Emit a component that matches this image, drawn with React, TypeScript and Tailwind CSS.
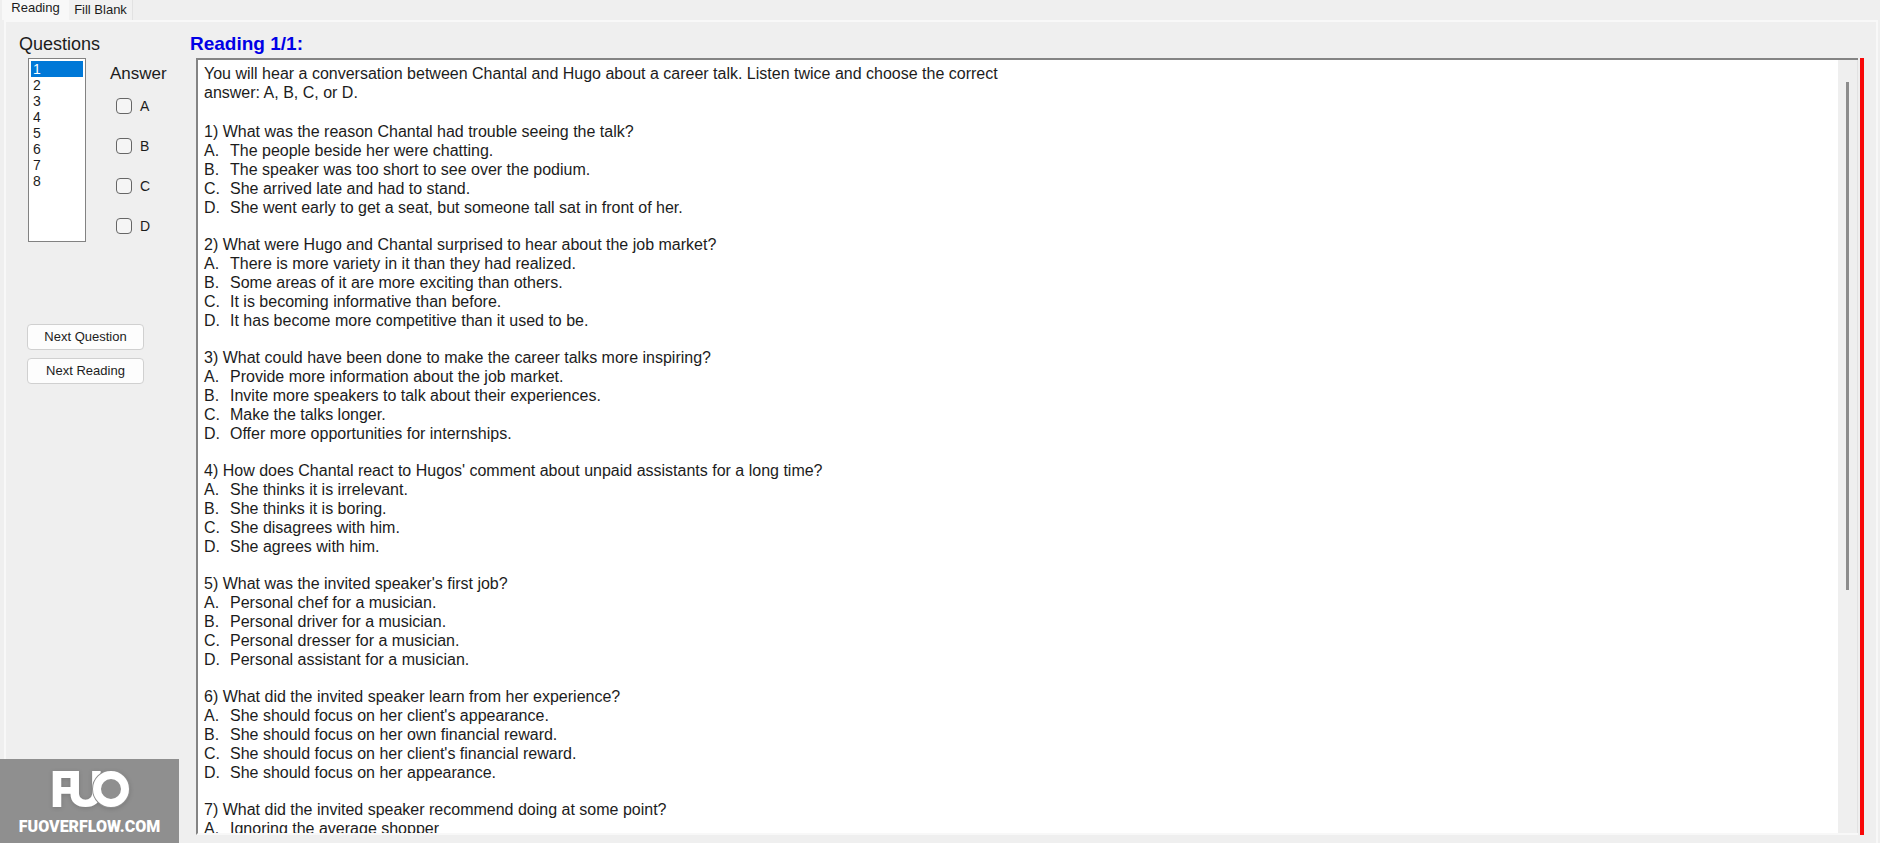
import { useState } from 'react'

const tabs = ['Reading', 'Fill Blank']
const choices = ['A', 'B', 'C', 'D']
const questionNumbers = ['1', '2', '3', '4', '5', '6', '7', '8']

const intro = [
  'You will hear a conversation between Chantal and Hugo about a career talk. Listen twice and choose the correct',
  'answer: A, B, C, or D.',
]

const questions = [
  {
    title: 'What was the reason Chantal had trouble seeing the talk?',
    options: [
      'The people beside her were chatting.',
      'The speaker was too short to see over the podium.',
      'She arrived late and had to stand.',
      'She went early to get a seat, but someone tall sat in front of her.',
    ],
  },
  {
    title: 'What were Hugo and Chantal surprised to hear about the job market?',
    options: [
      'There is more variety in it than they had realized.',
      'Some areas of it are more exciting than others.',
      'It is becoming informative than before.',
      'It has become more competitive than it used to be.',
    ],
  },
  {
    title: 'What could have been done to make the career talks more inspiring?',
    options: [
      'Provide more information about the job market.',
      'Invite more speakers to talk about their experiences.',
      'Make the talks longer.',
      'Offer more opportunities for internships.',
    ],
  },
  {
    title: "How does Chantal react to Hugos' comment about unpaid assistants for a long time?",
    options: [
      'She thinks it is irrelevant.',
      'She thinks it is boring.',
      'She disagrees with him.',
      'She agrees with him.',
    ],
  },
  {
    title: "What was the invited speaker's first job?",
    options: [
      'Personal chef for a musician.',
      'Personal driver for a musician.',
      'Personal dresser for a musician.',
      'Personal assistant for a musician.',
    ],
  },
  {
    title: 'What did the invited speaker learn from her experience?',
    options: [
      "She should focus on her client's appearance.",
      'She should focus on her own financial reward.',
      "She should focus on her client's financial reward.",
      'She should focus on her appearance.',
    ],
  },
  {
    title: 'What did the invited speaker recommend doing at some point?',
    options: ['Ignoring the average shopper'],
  },
]

function Tabs() {
  return (
    <div role="tablist" className="flex h-5 pl-0.5 text-[13px] leading-4">
      <button role="tab" aria-selected="true" className="w-[67px] bg-[#f8f8f8] pb-1">
        {tabs[0]}
      </button>
      <button
        role="tab"
        aria-selected="false"
        className="w-16 border-r border-[#e2e2e2] bg-[#f1f1f1]"
      >
        {tabs[1]}
      </button>
    </div>
  )
}

function QuestionList() {
  const [current, setCurrent] = useState('1')
  return (
    <select
      size={8}
      aria-labelledby="questions-label"
      value={current}
      onChange={(e) => setCurrent(e.target.value)}
      className="h-[184px] w-[58px] appearance-none overflow-hidden border border-[#828282] bg-white p-0.5 text-sm leading-4 outline-none"
    >
      {questionNumbers.map((n) => (
        <option
          key={n}
          value={n}
          className="h-4 min-h-0 px-0.5 py-0 leading-4 checked:bg-[linear-gradient(#0078d7,#0078d7)] checked:[-webkit-text-fill-color:white]"
        >
          {n}
        </option>
      ))}
    </select>
  )
}

function Answers() {
  return (
    <fieldset className="pt-1.5">
      <legend className="float-left pb-3.5 text-[17px] leading-5">Answer</legend>
      <div className="clear-both flex flex-col gap-6 pl-1.5">
        {choices.map((c) => (
          <label key={c} className="flex h-4 items-center gap-2 text-sm">
            <input
              type="checkbox"
              className="size-4 appearance-none rounded-sm border border-[#666] bg-[#f5f5f5] checked:bg-[#0078d7]"
            />
            {c}
          </label>
        ))}
      </div>
    </fieldset>
  )
}

function Logo() {
  return (
    <a
      href="#home"
      aria-label="FUOVERFLOW.COM"
      className="absolute bottom-0 left-0 flex h-[84px] w-[179px] flex-col items-center bg-[#8f8f8f] pt-3 text-white"
    >
      <svg viewBox="0 0 80 38" className="h-[38px] w-20 drop-shadow-sm" fill="none">
        <text x="0" y="36" fill="white" className="font-['Inter',sans-serif] text-[49px] font-extrabold">
          F<tspan dx="-11">U</tspan>
        </text>
        <circle cx="61" cy="18" r="18" stroke="#8f8f8f" strokeWidth="2" />
        <circle cx="61" cy="18" r="14" fill="#8f8f8f" stroke="white" strokeWidth="8" />
      </svg>
      <span className="mt-2 font-['Impact','Roboto',sans-serif] text-base leading-5 font-black">
        FUOVERFLOW.COM
      </span>
    </a>
  )
}

function ReadingText() {
  return (
    <article
      aria-label="Reading text"
      className="min-w-0 flex-1 overflow-hidden bg-white pt-1 pl-1.5 text-base leading-[19px] text-[#1c1c1c]"
    >
      <p className="mb-5">
        {intro.map((line) => (
          <span key={line} className="block">{line}</span>
        ))}
      </p>
      {questions.map((q, i) => (
        <section key={q.title} className="mb-[18px]">
          <h2>{i + 1}) {q.title}</h2>
          <ul>
            {q.options.map((option, n) => (
              <li key={option} className="flex">
                <span className="w-[26px]">{choices[n]}.</span>
                {option}
              </li>
            ))}
          </ul>
        </section>
      ))}
    </article>
  )
}

export default function App() {
  return (
    <div className="relative flex h-screen flex-col overflow-hidden bg-[#efefef] font-['Liberation_Sans',Arial,sans-serif] text-[#1c1c1c]">
      <Tabs />
      <main className="mr-0.5 ml-1 flex min-h-0 flex-1 border-t-2 border-r-2 border-l-2 border-[#f8f8f8]">
        <aside className="w-[184px] shrink-0 pt-2.5 pl-[13px]">
          <h1 id="questions-label" className="mb-0.5 text-lg leading-6">Questions</h1>
          <div className="flex gap-6 pl-[9px]">
            <QuestionList />
            <Answers />
          </div>
          <div className="mt-[82px] flex flex-col gap-2 pl-2 text-[13px]">
            <button className="h-[26px] w-[117px] rounded border border-[#d0d0d0] bg-[#fdfdfd]">Next Question</button>
            <button className="h-[26px] w-[117px] rounded border border-[#d0d0d0] bg-[#fdfdfd]">Next Reading</button>
          </div>
        </aside>
        <div className="flex min-w-0 flex-1 flex-col pt-2.5 pr-3 pb-2">
          <h2 className="mb-0.5 text-[19px] leading-6 font-bold text-[#0000e6]">Reading 1/1:</h2>
          <div className="flex min-h-0 flex-1">
            <div className="mr-0.5 ml-1.5 flex min-w-0 flex-1 border-t-2 border-b-2 border-l-2 border-t-[#848484] border-b-[#f8f8f8] border-l-[#848484]">
              <ReadingText />
              {/* scroll bar */}
              <div className="w-5 border-r border-[#e2e2e2] bg-[#efefef] pt-[22px] pl-2">
                <div className="h-[508px] w-[3px] bg-[#8c8c8c]" />
              </div>
            </div>
            <div className="w-1 bg-[#f80808]" />
          </div>
        </div>
      </main>
      <Logo />
    </div>
  )
}
